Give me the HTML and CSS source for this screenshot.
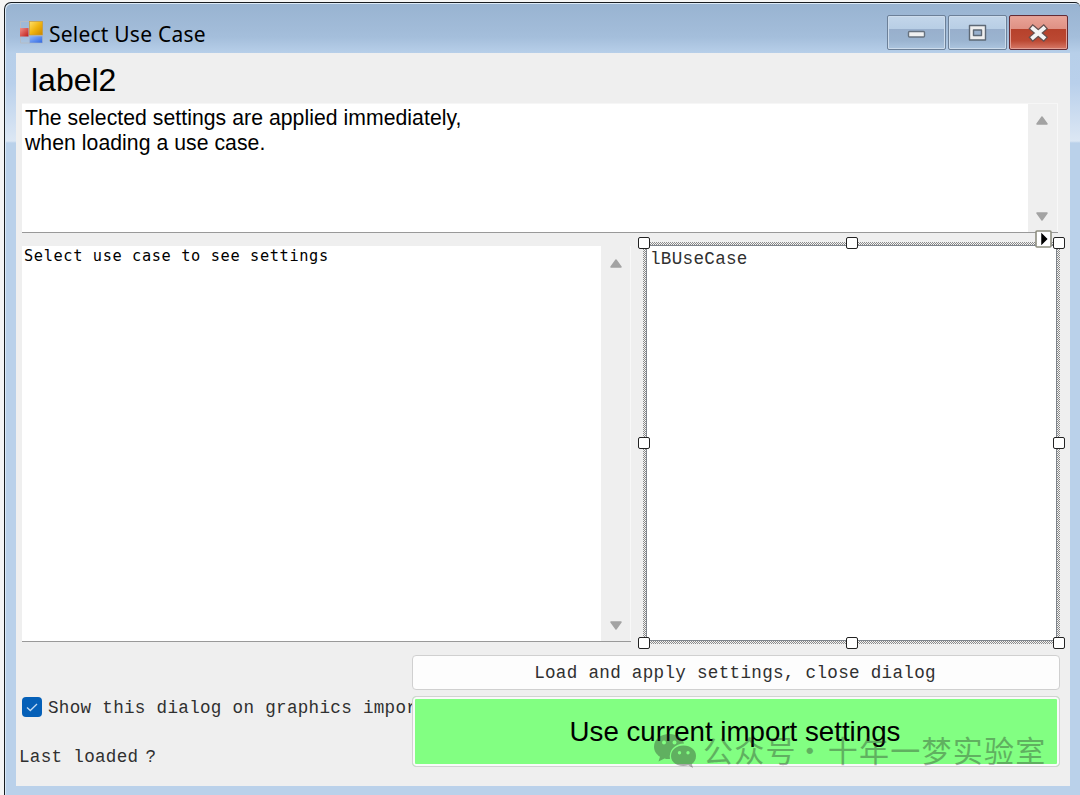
FILE: index.html
```html
<!DOCTYPE html>
<html lang="en">
<head>
<meta charset="utf-8">
<title>Select Use Case</title>
<link rel="stylesheet" href="styles.css">
</head>
<body>
<div class="window">
  <header class="titlebar">
    <svg class="app-icon" width="24" height="23" viewBox="0 0 24 23">
      <defs>
        <linearGradient id="y" x1="0" y1="0" x2="1" y2="1"><stop offset="0" stop-color="#ffe06a"/><stop offset=".5" stop-color="#f0b410"/><stop offset="1" stop-color="#c98500"/></linearGradient>
        <linearGradient id="r" x1="0" y1="0" x2="1" y2="1"><stop offset="0" stop-color="#f09088"/><stop offset="1" stop-color="#c01c18"/></linearGradient>
        <linearGradient id="b" x1="0" y1="0" x2="1" y2="1"><stop offset="0" stop-color="#90b8ff"/><stop offset="1" stop-color="#2e66e0"/></linearGradient>
      </defs>
      <path d="M.5 .5H10M.5 .5V22M.5 22H10V16" fill="none" stroke="#b3bcc6"/>
      <rect x="9.500" y=".5" width="13" height="13.5" fill="url(#y)" stroke="#c99a3a" stroke-width=".7"/>
      <rect x="0" y="7" width="8.500" height="8.5" fill="url(#r)"/>
      <rect x="9.500" y="15" width="13" height="7" fill="url(#b)" stroke="#a8b4c8" stroke-width=".6"/>
    </svg>
    <h1 class="title">Select Use Case</h1>
    <div class="caption-buttons">
      <span class="caption"><svg width="57" height="32" viewBox="0 0 57 32"><rect x="20.500" y="15.500" width="16" height="5.500" rx="1" fill="#f1f1f1" stroke="#67727f" stroke-width="1.4"/></svg></span>
      <span class="caption"><svg width="57" height="32" viewBox="0 0 57 32"><path d="M20.500 9.500h16v14.500h-16zM24.500 14v5.500h8v-5.500z" fill="#efefef" fill-rule="evenodd" stroke="#5e6976" stroke-width="1.4" stroke-linejoin="round"/></svg></span>
      <span class="caption close"><svg width="57" height="32" viewBox="0 0 57 32"><path d="M23 12.500L33.500 21.500M33.500 12.500L23 21.500" stroke="#65504f" stroke-width="6.500" stroke-linecap="square"/><path d="M23 12.500L33.500 21.500M33.500 12.500L23 21.500" stroke="#f4f4f4" stroke-width="4" stroke-linecap="square"/></svg></span>
    </div>
  </header>
  <main class="client">
    <h2 class="heading">label2</h2>
    <div class="textbox description">
      <p class="text">The selected settings are applied immediately,<br>when loading a use case.</p>
      <div class="scrollbar"><svg class="arrow" viewBox="0 0 12 9"><path d="M6 1L11 8H1Z"/></svg><svg class="arrow" viewBox="0 0 12 9"><path d="M6 8L11 1H1Z"/></svg></div>
    </div>
    <div class="panes">
      <div class="textbox settings">
        <p class="text">Select use case to see settings</p>
        <div class="scrollbar"><svg class="arrow" viewBox="0 0 12 9"><path d="M6 1L11 8H1Z"/></svg><svg class="arrow" viewBox="0 0 12 9"><path d="M6 8L11 1H1Z"/></svg></div>
      </div>
      <div class="selection">
        <div class="listbox simsun">lBUseCase</div>
        <i class="handle n w"></i><i class="handle n c"></i><i class="handle n e"></i>
        <i class="handle m w"></i><i class="handle m e"></i>
        <i class="handle s w"></i><i class="handle s c"></i><i class="handle s e"></i>
        <svg class="smart-tag" width="17" height="18" viewBox="0 0 17 18"><rect x="1" y="1" width="15" height="16" rx="1" fill="#fff" stroke="#8e8e80" stroke-width="1.600"/><path d="M7 4.500L11.500 9L7 13.500Z" fill="#000" stroke="#000" stroke-width="1.500"/></svg>
      </div>
    </div>
    <div class="footer">
      <div class="options simsun">
        <label class="check"><svg class="box" width="20" height="20" viewBox="0 0 20 20"><rect width="20" height="20" rx="4" fill="#0560b8"/><path d="M5 10.500L8.300 13.500L15 7" fill="none" stroke="#c4dcf3" stroke-width="1.300"/></svg><span>Show this dialog on graphics import</span></label>
        <div class="last"><span>Last loaded</span><span>?</span></div>
      </div>
      <div class="buttons">
        <button class="button simsun">Load and apply settings, close dialog</button>
        <button class="button primary">Use current import settings</button>
      </div>
    </div>
  </main>
  <div class="watermark">
    <svg width="43" height="36" viewBox="0 0 43 36"><path fill-rule="evenodd" d="M15.500 1C6.500 1 0 6.500 0 13.500C0 18 2.500 21.500 6 23.800L4.500 28.500L10.500 25.500C12 26 14 26.200 16 26C14.500 17.500 21 10.500 30 10.500C28.500 4.500 22.500 1 15.500 1ZM10 7.500a2 2 0 1 1 0 4a2 2 0 1 1 0-4ZM20.500 7.500a2 2 0 1 1 0 4a2 2 0 1 1 0-4Z"/><path fill-rule="evenodd" d="M29.500 12.500C22.500 12.500 17 17 17 23C17 29 22.500 33 29.500 33C31.200 33 32.800 32.800 34.300 32.300L39 35L37.800 31C40.500 29 42 26.500 42 23C42 17 36.500 12.500 29.500 12.500ZM25.500 18a1.700 1.700 0 1 1 0 3.400a1.700 1.700 0 1 1 0-3.400ZM34 18a1.700 1.700 0 1 1 0 3.400a1.700 1.700 0 1 1 0-3.400Z"/></svg>
    <span class="account">公众号<span class="dot">·</span>十年一梦实验室</span>
  </div>
</div>
</body>
</html>
```
FILE: styles.css
```css
* { box-sizing: border-box; }
html, body { height: 100%; }
body {
  margin: 0;
  padding: 2px 0 0 4px;
  overflow: hidden;
  background: #f5f5f5;
  font-family: "Liberation Sans", Arial, sans-serif;
  color: #000;
}
h1, h2, p { margin: 0; font-weight: 400; }
.window {
  position: relative;
  height: 793px;
  padding: 0 10px 9px 11px;
  border: solid #181c20;
  border-width: 1px 0 0 1px;
  border-radius: 7px 5px 0 0;
  box-shadow: inset 1px 1px 0 #dceaf7;
  background: linear-gradient(#98b3d1 0, #a1bbd8 25px, #a4bedb 34px, #b7cfe9 50px, #b9d0eb 80px, #dce7f4 138px, #bad1ea 140px);
  overflow: hidden;
}
.titlebar { display: flex; height: 50px; padding: 12px 0 0 4px; }
.app-icon { margin-top: 6px; }
.title {
  margin-left: 5px;
  font: 21px/38px "Noto Sans", "Open Sans", sans-serif;
  letter-spacing: 0.22px;
}
.caption-buttons { display: flex; gap: 2px; margin-left: auto; margin-right: 2px; }
.caption {
  width: 59px;
  height: 35px;
  border: 1px solid #6c8098;
  border-radius: 2px;
  box-shadow: inset 0 0 0 1px #cddcec;
  background: linear-gradient(#c3d6ea, #b8cee5 38%, #98afcc 39%, #9bb4d0 75%, #acc5df);
}
.close {
  border-color: #642c35;
  box-shadow: inset 0 0 0 1px #e3a096;
  background: linear-gradient(#e9a498, #df9184 38%, #b6412b 39%, #bc4933 75%, #d77968);
}
.client {
  width: 1054px;
  height: 733px;
  padding: 7px 0 0 6px;
  background: #efefef;
}
.heading { height: 43px; padding-left: 9px; font-size: 32px; line-height: 40px; }
.textbox { display: flex; justify-content: space-between; background: #fff; border-bottom: 1px solid #999; }
.description { width: 1036px; height: 130px; border-top: 1px solid #f6f6f6; }
.description .text { padding: 1px 0 0 3px; font-size: 21.2px; line-height: 25px; letter-spacing: 0.05px; }
.scrollbar {
  display: flex;
  flex-direction: column;
  justify-content: space-between;
  align-items: center;
  width: 30px;
  padding: 12px 1px 11px 0;
  background: #efefef;
  border-right: 1px solid #f8f8f8;
}
.arrow { width: 12px; height: 9px; fill: #a3a3a3; stroke: #a3a3a3; stroke-width: 1.500px; stroke-linejoin: round; }
.panes { display: flex; gap: 12px; margin-top: 13px; height: 396px; }
.settings { width: 609px; }
.settings .scrollbar { padding: 13px 0 11px; }
.settings .text { padding: 1px 0 0 2px; font: 15.3px/18px "DejaVu Sans Mono", monospace; letter-spacing: 0.62px; }
.simsun { font-family: "Liberation Mono", "Courier New", monospace; font-size: 17.6px; letter-spacing: 0.3px; color: #303030; }
.selection {
  position: relative;
  width: 417px;
  height: 402px;
  margin-top: -4px;
  padding: 3px;
  background: repeating-conic-gradient(#8a8a8a 0 25%, #f4f4f4 0 50%) 0 0 / 2px 2px;
}
.listbox { height: 396px; padding: 2px 0 0 3px; border: 1px solid #7f858d; background: #fff; line-height: 22px; }
.handle { position: absolute; width: 12px; height: 12px; border: 1.500px solid #222; border-radius: 2px; background: #fff; }
.n { top: -5px; }
.m { top: 195px; }
.s { bottom: -5px; }
.w { left: -5px; }
.c { left: 203px; }
.e { right: -5px; }
.smart-tag { position: absolute; top: -12px; right: 8px; }
.footer { display: flex; margin-top: 13px; }
.options { width: 393px; margin-left: -3px; padding-top: 42px; overflow: hidden; white-space: nowrap; }
.check { display: flex; gap: 6px; height: 22px; padding-left: 3px; line-height: 23px; }
.box { flex: none; }
.last { display: flex; gap: 7px; margin-top: 27px; line-height: 23px; }
.buttons { display: flex; flex-direction: column; gap: 6px; width: 648px; }
.button { height: 35px; padding: 0 2px 0 0; border: 1px solid #d0d0d0; border-radius: 4px; background: #fdfdfd; }
.buttons .primary {
  height: 71px;
  border: 1px solid #d2d2d2;
  box-shadow: inset 0 0 0 2px #fafafa;
  background: #82ff82;
  font: 27.7px/67px "Liberation Sans", Arial, sans-serif;
  letter-spacing: 0;
  color: #000;
}
.watermark {
  position: absolute;
  left: 649px;
  top: 730px;
  display: flex;
  opacity: 0.36;
  fill: #262626;
  color: #262626;
}
.account { margin: -4px 0 0 6px; font: 30px/40px "Noto Sans CJK SC", sans-serif; letter-spacing: 1.25px; white-space: nowrap; }
.dot { display: inline-block; width: 31px; text-align: center; text-indent: -4px; }
```
